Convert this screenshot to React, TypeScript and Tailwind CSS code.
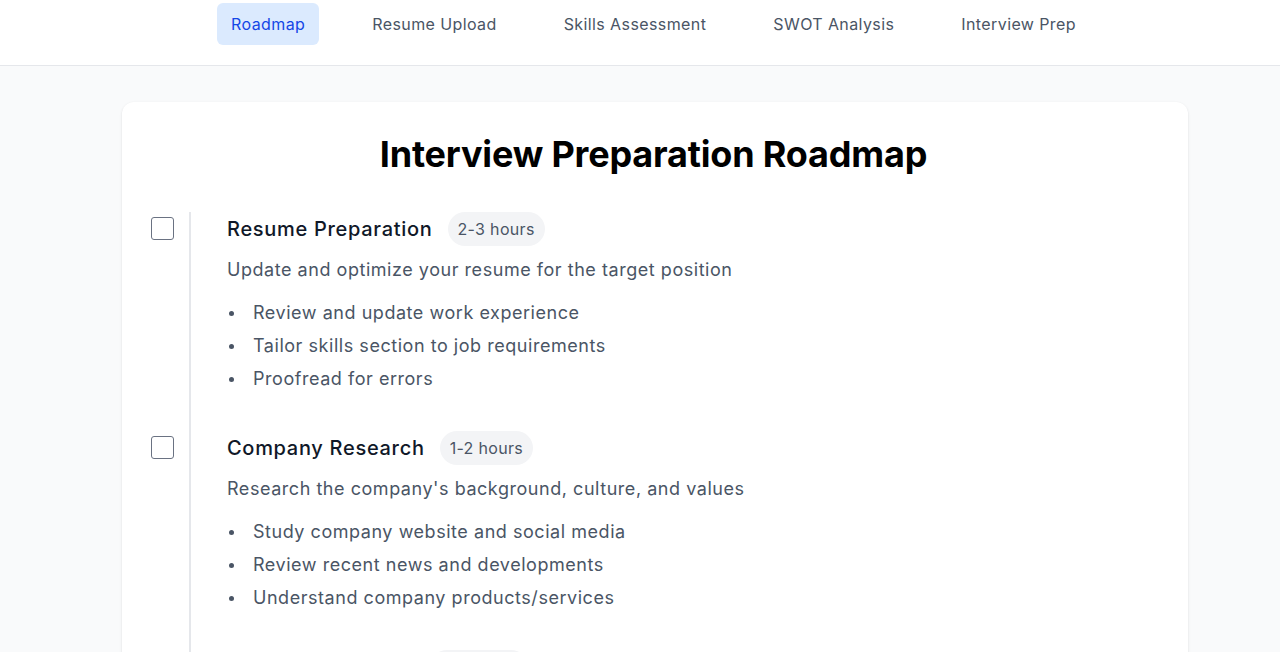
import React from 'react'

const tabs = ['Roadmap', 'Resume Upload', 'Skills Assessment', 'SWOT Analysis', 'Interview Prep']

const steps = [
  {
    title: 'Resume Preparation',
    time: '2-3 hours',
    desc: 'Update and optimize your resume for the target position',
    tasks: ['Review and update work experience', 'Tailor skills section to job requirements', 'Proofread for errors'],
  },
  {
    title: 'Company Research',
    time: '1-2 hours',
    desc: "Research the company's background, culture, and values",
    tasks: ['Study company website and social media', 'Review recent news and developments', 'Understand company products/services'],
  },
  {
    title: 'Technical Practice',
    time: '3-4 hours',
    desc: 'Brush up on the technical skills required for the role',
    tasks: ['Review core concepts', 'Practice coding problems', 'Do mock interviews'],
  },
]

const App = () => {
  return (
    <div className="min-h-screen bg-gray-50 font-['Inter',sans-serif]">
      <header className="h-[66px] bg-white border-b border-gray-200 pl-[30px]">
        <nav className="flex justify-center gap-[39px] pt-[3px] pr-[3px]">
          {tabs.map((t, i) => (
            <button
              key={t}
              className={
                i === 0
                  ? 'px-[14px] py-[9px] rounded-md bg-blue-100 text-blue-700 text-base leading-6 tracking-[0.025em]'
                  : 'px-[14px] py-[9px] rounded-md text-gray-600 text-base leading-6 tracking-[0.025em]'
              }
            >
              {t}
            </button>
          ))}
        </nav>
      </header>

      <main className="pl-[30px] pt-9">
        <div className="mx-auto w-[1066px] bg-white rounded-xl shadow-sm pt-8 pl-[29px] pr-8">
          <h1 className="text-center text-4xl leading-10 font-bold text-black tracking-[-0.005em] mb-[38px]">
            Interview Preparation Roadmap
          </h1>
          <div>
            {steps.map((s) => (
              <div key={s.title} className="flex">
                <div className="pt-[5px]">
                  <div className="w-[23px] h-[23px] rounded-[3px] border border-gray-500 bg-white" />
                </div>
                <div className="ml-[15px] border-l-2 border-gray-200 pl-[36px] pb-[38px] flex-1">
                  <div className="flex items-center gap-[15px]">
                    <h3 className="text-xl leading-7 font-medium text-gray-900 tracking-[0.035em]">{s.title}</h3>
                    <span className="px-[10px] py-[5px] rounded-full bg-gray-100 text-gray-600 text-base leading-6 tracking-[0.02em]">
                      {s.time}
                    </span>
                  </div>
                  <p className="mt-[10px] text-lg leading-7 text-gray-600 tracking-[0.03em]">{s.desc}</p>
                  <ul className="mt-[15px] flex flex-col gap-[5px]">
                    {s.tasks.map((task) => (
                      <li key={task} className="flex items-center text-lg leading-7 text-gray-600 tracking-[0.03em]">
                        <span className="ml-[2px] w-[5px] h-[5px] rounded-full bg-gray-600 mr-[19px]" />
                        {task}
                      </li>
                    ))}
                  </ul>
                </div>
              </div>
            ))}
          </div>
        </div>
      </main>
    </div>
  )
}

export default App
